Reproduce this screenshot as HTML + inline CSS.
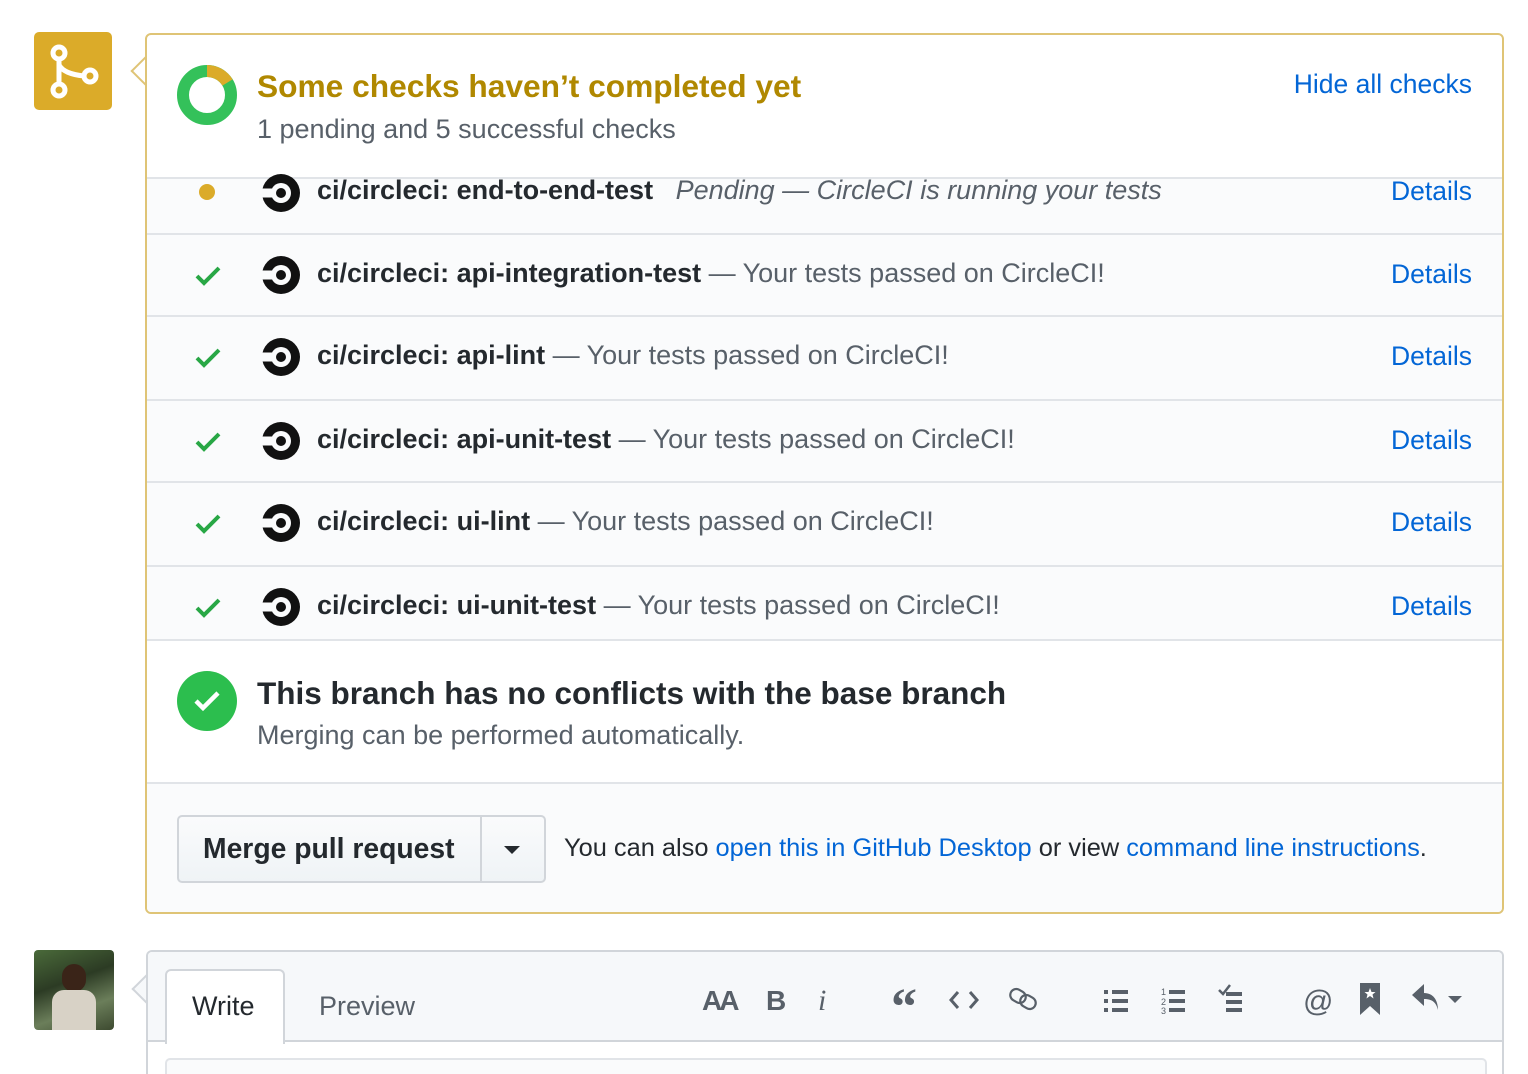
<!DOCTYPE html>
<html style="height:1074px;overflow:hidden"><head><meta charset="utf-8"><style>
*{box-sizing:border-box;margin:0;padding:0}
body{width:1528px;height:1074px;background:#fff;font-family:"Liberation Sans",sans-serif;position:relative;overflow:hidden;color:#24292e}
.abs{position:absolute}
.box{left:145px;top:33px;width:1359px;height:881px;border:2px solid #dfc476;border-radius:6px;background:#fff;overflow:hidden}
.caret{left:135px;top:60px;width:22px;height:22px;background:#fff;border-left:2px solid #dfc476;border-bottom:2px solid #dfc476;transform:rotate(45deg)}
.row{position:absolute;left:0;width:1355px;background:#fafbfc;border-top:2px solid #e1e4e8}
.row .t{position:absolute;left:170px;font-size:27px;white-space:nowrap;color:#586069}
.row .t b{color:#24292e}
.row .d{position:absolute;right:30px;font-size:26.5px;color:#0366d6}
.row svg.c{position:absolute;left:114px}
.row svg.k{position:absolute;left:47px}
a{color:#0366d6;text-decoration:none}
</style></head><body>
<div class="abs" style="left:34px;top:32px;width:78px;height:78px;background:#dbab29;border-radius:5px">
<svg width="78" height="78" viewBox="0 0 78 78"><g fill="none" stroke="#fff" stroke-width="5"><circle cx="25" cy="21" r="6"/><circle cx="25" cy="58" r="6"/><circle cx="56" cy="44" r="6"/><path d="M25 27V52M25 33Q30 42 50 44"/></g></svg></div>
<div class="abs caret"></div>
<div class="abs box">
<svg class="abs" style="left:29px;top:29px" width="62" height="62" viewBox="0 0 62 62"><circle cx="31" cy="31" r="24" fill="none" stroke="#34c15a" stroke-width="12"/><path d="M31 7A24 24 0 0 1 51.5 18.5" fill="none" stroke="#dbab29" stroke-width="12"/></svg>
<div class="abs" style="left:110px;top:33px;font-size:31.7px;font-weight:bold;color:#b08800">Some checks haven’t completed yet</div>
<div class="abs" style="left:110px;top:79px;font-size:27px;color:#586069">1 pending and 5 successful checks</div>
<div class="abs" style="right:30px;top:34px;font-size:26.5px;color:#0366d6">Hide all checks</div>

<div class="row" style="top:142px;height:57px">
<svg class="k" width="30" height="30" style="top:-2px" viewBox="0 0 30 30"><circle cx="13" cy="15" r="8" fill="#dbab29"/></svg>
<svg class="c" width="40" height="40" style="top:-6px" viewBox="0 0 40 40"><circle cx="20" cy="20" r="19" fill="#111"/><circle cx="20" cy="20" r="10" fill="#fafbfc"/><rect x="0" y="15.5" width="12" height="9" fill="#fafbfc"/><circle cx="20" cy="20" r="5" fill="#111"/></svg>
<div class="t" style="top:-4px"><b>ci/circleci: end-to-end-test</b> &nbsp; <i>Pending — CircleCI is running your tests</i></div>
<div class="d" style="top:-3px">Details</div></div>

<div class="row" style="top:198px;height:82px"><svg class="k" width="30" height="30" style="top:26px" viewBox="0 0 30 30"><path d="M3 15l7 7L25 7" fill="none" stroke="#28a745" stroke-width="4"/></svg><svg class="c" width="40" height="40" style="top:20px" viewBox="0 0 40 40"><circle cx="20" cy="20" r="19" fill="#111"/><circle cx="20" cy="20" r="10" fill="#fafbfc"/><rect x="0" y="15.5" width="12" height="9" fill="#fafbfc"/><circle cx="20" cy="20" r="5" fill="#111"/></svg><div class="t" style="top:23px"><b>ci/circleci: api-integration-test</b> — Your tests passed on CircleCI!</div><div class="d" style="top:24px">Details</div></div>

<div class="row" style="top:280px;height:84px"><svg class="k" width="30" height="30" style="top:26px" viewBox="0 0 30 30"><path d="M3 15l7 7L25 7" fill="none" stroke="#28a745" stroke-width="4"/></svg><svg class="c" width="40" height="40" style="top:20px" viewBox="0 0 40 40"><circle cx="20" cy="20" r="19" fill="#111"/><circle cx="20" cy="20" r="10" fill="#fafbfc"/><rect x="0" y="15.5" width="12" height="9" fill="#fafbfc"/><circle cx="20" cy="20" r="5" fill="#111"/></svg><div class="t" style="top:23px"><b>ci/circleci: api-lint</b> — Your tests passed on CircleCI!</div><div class="d" style="top:24px">Details</div></div>

<div class="row" style="top:364px;height:82px"><svg class="k" width="30" height="30" style="top:26px" viewBox="0 0 30 30"><path d="M3 15l7 7L25 7" fill="none" stroke="#28a745" stroke-width="4"/></svg><svg class="c" width="40" height="40" style="top:20px" viewBox="0 0 40 40"><circle cx="20" cy="20" r="19" fill="#111"/><circle cx="20" cy="20" r="10" fill="#fafbfc"/><rect x="0" y="15.5" width="12" height="9" fill="#fafbfc"/><circle cx="20" cy="20" r="5" fill="#111"/></svg><div class="t" style="top:23px"><b>ci/circleci: api-unit-test</b> — Your tests passed on CircleCI!</div><div class="d" style="top:24px">Details</div></div>

<div class="row" style="top:446px;height:84px"><svg class="k" width="30" height="30" style="top:26px" viewBox="0 0 30 30"><path d="M3 15l7 7L25 7" fill="none" stroke="#28a745" stroke-width="4"/></svg><svg class="c" width="40" height="40" style="top:20px" viewBox="0 0 40 40"><circle cx="20" cy="20" r="19" fill="#111"/><circle cx="20" cy="20" r="10" fill="#fafbfc"/><rect x="0" y="15.5" width="12" height="9" fill="#fafbfc"/><circle cx="20" cy="20" r="5" fill="#111"/></svg><div class="t" style="top:23px"><b>ci/circleci: ui-lint</b> — Your tests passed on CircleCI!</div><div class="d" style="top:24px">Details</div></div>

<div class="row" style="top:530px;height:76px;border-bottom:2px solid #e1e4e8"><svg class="k" width="30" height="30" style="top:26px" viewBox="0 0 30 30"><path d="M3 15l7 7L25 7" fill="none" stroke="#28a745" stroke-width="4"/></svg><svg class="c" width="40" height="40" style="top:20px" viewBox="0 0 40 40"><circle cx="20" cy="20" r="19" fill="#111"/><circle cx="20" cy="20" r="10" fill="#fafbfc"/><rect x="0" y="15.5" width="12" height="9" fill="#fafbfc"/><circle cx="20" cy="20" r="5" fill="#111"/></svg><div class="t" style="top:23px"><b>ci/circleci: ui-unit-test</b> — Your tests passed on CircleCI!</div><div class="d" style="top:24px">Details</div></div>

<svg class="abs" style="left:29px;top:635px" width="62" height="62" viewBox="0 0 62 62"><circle cx="31" cy="31" r="30" fill="#2cbe4e"/><path d="M20 31l7 7 15-15" fill="none" stroke="#fff" stroke-width="4.5"/></svg>
<div class="abs" style="left:110px;top:640px;font-size:31.5px;font-weight:bold">This branch has no conflicts with the base branch</div>
<div class="abs" style="left:110px;top:685px;font-size:27px;color:#586069">Merging can be performed automatically.</div>

<div class="abs" style="left:0;top:747px;width:1355px;height:140px;background:#fafbfc;border-top:2px solid #e1e4e8"></div>
<div class="abs" style="left:30px;top:780px;width:369px;height:68px;border:2px solid #d1d5da;border-radius:5px;background:linear-gradient(#fafbfc,#eff3f6)">
<div class="abs" style="left:24px;top:15px;font-size:28.3px;font-weight:bold">Merge pull request</div>
<div class="abs" style="left:301px;top:0;width:2px;height:64px;background:#d1d5da"></div>
<svg class="abs" style="left:324px;top:28px" width="18" height="10"><path d="M1 1h16L9 9z" fill="#24292e"/></svg></div>
<div class="abs" style="left:417px;top:799px;font-size:25.4px">You can also <a>open this in GitHub Desktop</a> or view <a>command line instructions</a>.</div>
</div>

<div class="abs" style="left:34px;top:950px;width:80px;height:80px;border-radius:4px;background:linear-gradient(160deg,#4a6a3a,#2c3b24 40%,#6b7e5a 70%,#3d4a30)">
<div class="abs" style="left:28px;top:14px;width:24px;height:28px;border-radius:12px;background:#3a2418"></div>
<div class="abs" style="left:18px;top:40px;width:44px;height:40px;border-radius:12px 12px 0 0;background:#d8d2c6"></div></div>
<div class="abs" style="left:136px;top:978px;width:22px;height:22px;background:#f6f8fa;border-left:2px solid #d1d5da;border-bottom:2px solid #d1d5da;transform:rotate(45deg)"></div>
<div class="abs" style="left:146px;top:950px;width:1358px;height:124px;border:2px solid #d1d5da;border-bottom:none;border-radius:6px 6px 0 0;background:#fff;overflow:hidden">
<div class="abs" style="left:0;top:0;width:1356px;height:90px;background:#f6f8fa;border-bottom:2px solid #d1d5da"></div>
<div class="abs" style="left:17px;top:17px;width:120px;height:75px;background:#fff;border:2px solid #d1d5da;border-bottom:none;border-radius:6px 6px 0 0"></div>
<div class="abs" style="left:44px;top:39px;font-size:27px">Write</div>
<div class="abs" style="left:171px;top:39px;font-size:27px;color:#586069">Preview</div>
<div class="abs" style="left:17px;top:106px;width:1322px;height:60px;border:2px solid #e1e4e8;border-radius:5px;background:#fafbfc"></div>
<svg class="abs" style="left:540px;top:28px" width="800" height="40" viewBox="0 0 800 40" fill="#586069">
<text x="14" y="30" font-family="Liberation Sans Narrow, Liberation Sans" font-weight="bold" font-size="28" letter-spacing="-3">AA</text>
<text x="78" y="30" font-family="Liberation Sans" font-weight="bold" font-size="28">B</text>
<text x="130" y="30" font-family="Liberation Serif" font-style="italic" font-size="30">i</text>
<text x="203" y="44" font-family="Liberation Serif" font-weight="bold" font-size="52">“</text>
<path d="M270 12l-7 8 7 8M282 12l7 8-7 8" fill="none" stroke="#586069" stroke-width="3"/>
<g fill="none" stroke="#586069" stroke-width="2.2"><rect x="322" y="10" width="16" height="12" rx="6" transform="rotate(30 330 16)"/><rect x="332" y="16" width="16" height="12" rx="6" transform="rotate(30 340 22)"/></g>
<g><rect x="416" y="10" width="4" height="4"/><rect x="424" y="10" width="16" height="4"/><rect x="416" y="19" width="4" height="4"/><rect x="424" y="19" width="16" height="4"/><rect x="416" y="28" width="4" height="4"/><rect x="424" y="28" width="16" height="4"/></g>
<g><text x="473" y="15" font-size="9" font-family="Liberation Sans">1</text><text x="473" y="25" font-size="9" font-family="Liberation Sans">2</text><text x="473" y="34" font-size="9" font-family="Liberation Sans">3</text><rect x="481" y="10" width="16" height="4"/><rect x="481" y="19" width="16" height="4"/><rect x="481" y="28" width="16" height="4"/></g>
<g><path d="M531 10l4 4 7-9" fill="none" stroke="#586069" stroke-width="2.5"/><rect x="538" y="12" width="16" height="4"/><rect x="538" y="20" width="16" height="4"/><rect x="538" y="28" width="16" height="4"/></g>
<text x="615" y="31" font-family="Liberation Sans" font-size="30">@</text>
</svg>
<svg class="abs" style="left:1210px;top:30px" width="24" height="34"><path d="M2 1h20v32l-10-9-10 9z" fill="#586069"/><path d="M12 6l1.5 4h4l-3 2.5 1 4-3.5-2.5-3.5 2.5 1-4-3-2.5h4z" fill="#fff"/></svg>
<svg class="abs" style="left:1262px;top:30px" width="56" height="34"><path d="M14 2L2 13l12 11v-7c8 0 12 3 14 11 0-10-5-17-14-17z" fill="#586069"/><path d="M38 14h14l-7 7z" fill="#586069"/></svg>
</div>
</body></html>
